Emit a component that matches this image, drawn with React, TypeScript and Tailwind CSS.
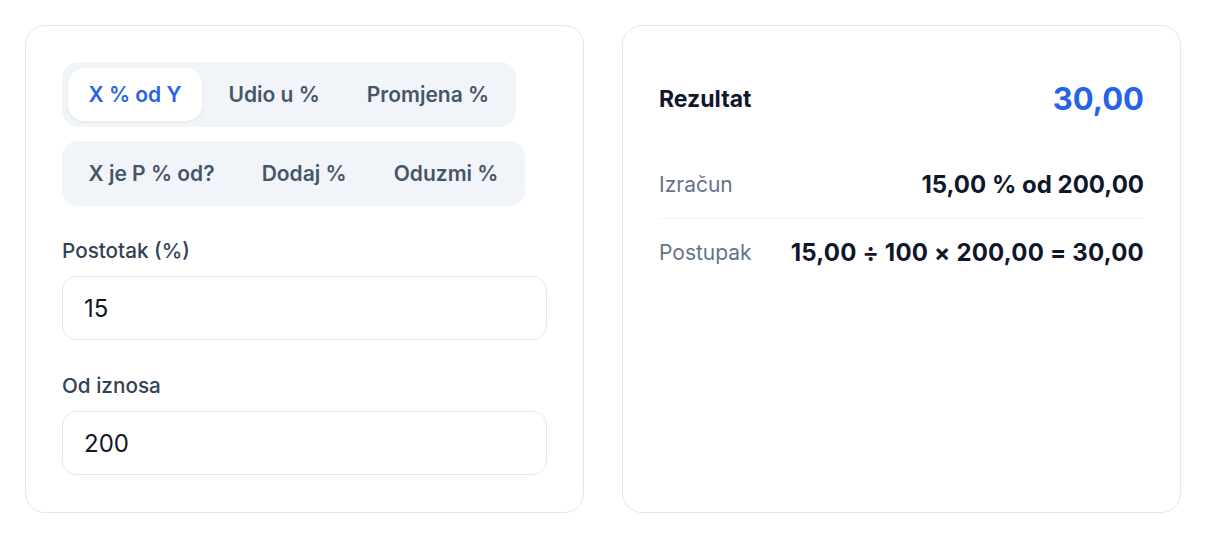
import { useState } from "react";

const modesTop = ["X % od Y", "Udio u %", "Promjena %"];
const modesBottom = ["X je P % od?", "Dodaj %", "Oduzmi %"];

function TabGroup({
  items,
  active,
  onSelect,
}: {
  items: string[];
  active: string;
  onSelect: (v: string) => void;
}) {
  return (
    <div className="inline-flex self-start gap-[6px] rounded-[16px] bg-[#f1f5f9] p-[6px]">
      {items.map((item) => (
        <button
          key={item}
          onClick={() => onSelect(item)}
          className={
            item === active
              ? "h-[53px] rounded-[16px] bg-white px-[20.5px] text-[21px] font-semibold text-[#2563eb] shadow-[0_1px_3px_rgba(15,23,42,0.08)]"
              : "h-[53px] rounded-[16px] px-[20.5px] text-[21px] font-semibold text-[#475569]"
          }
        >
          {item}
        </button>
      ))}
    </div>
  );
}

function Field({
  label,
  value,
  onChange,
}: {
  label: string;
  value: string;
  onChange: (v: string) => void;
}) {
  return (
    <label className="flex flex-col">
      <span className="text-[20.7px] font-medium leading-[28px] text-[#334155]">
        {label}
      </span>
      <input
        value={value}
        onChange={(e) => onChange(e.target.value)}
        className="mt-[11px] h-[64px] rounded-[14px] border border-[#e2e8f0] bg-white px-[21px] text-[24px] text-[#0f172a] outline-none"
      />
    </label>
  );
}

export default function App() {
  const [mode, setMode] = useState("X % od Y");
  const [percent, setPercent] = useState("15");
  const [amount, setAmount] = useState("200");

  const p = parseFloat(percent.replace(",", ".")) || 0;
  const a = parseFloat(amount.replace(",", ".")) || 0;
  const fmt = (n: number) =>
    n.toLocaleString("hr-HR", { minimumFractionDigits: 2, maximumFractionDigits: 2 });
  const result = (p / 100) * a;

  return (
    <div
      className="flex gap-[38px] bg-white p-[25px]"
      style={{ fontFamily: "Inter, 'Noto Sans', sans-serif" }}
    >
      <div className="flex flex-1 flex-col rounded-[20px] border border-[#e5e7eb] px-[36px] pt-[36px] pb-[37px]">
        <TabGroup items={modesTop} active={mode} onSelect={setMode} />
        <div className="mt-[14px] flex">
          <TabGroup items={modesBottom} active={mode} onSelect={setMode} />
        </div>
        <div className="mt-[31px]">
          <Field label="Postotak (%)" value={percent} onChange={setPercent} />
        </div>
        <div className="mt-[32px]">
          <Field label="Od iznosa" value={amount} onChange={setAmount} />
        </div>
      </div>

      <div className="flex flex-1 flex-col rounded-[20px] border border-[#e5e7eb] p-[36px]">
        <div className="flex h-[74px] items-center justify-between">
          <span className="text-[23px] font-bold text-[#0f172a]">Rezultat</span>
          <span className="text-[31px] font-bold text-[#2563eb]">{fmt(result)}</span>
        </div>
        <div className="mt-[15px]">
          <div className="flex items-center justify-between border-b border-[#f1f5f9] py-[20px] leading-[27px]">
            <span className="text-[21px] text-[#64748b]">Izračun</span>
            <span className="text-[24px] font-bold text-[#0f172a]">
              {fmt(p)} % od {fmt(a)}
            </span>
          </div>
          <div className="flex items-center justify-between py-[20px] leading-[27px]">
            <span className="text-[21px] text-[#64748b]">Postupak</span>
            <span className="text-[24px] font-bold tracking-[0.2px] text-[#0f172a]">
              {fmt(p)} ÷ 100 × {fmt(a)} = {fmt(result)}
            </span>
          </div>
        </div>
      </div>
    </div>
  );
}
